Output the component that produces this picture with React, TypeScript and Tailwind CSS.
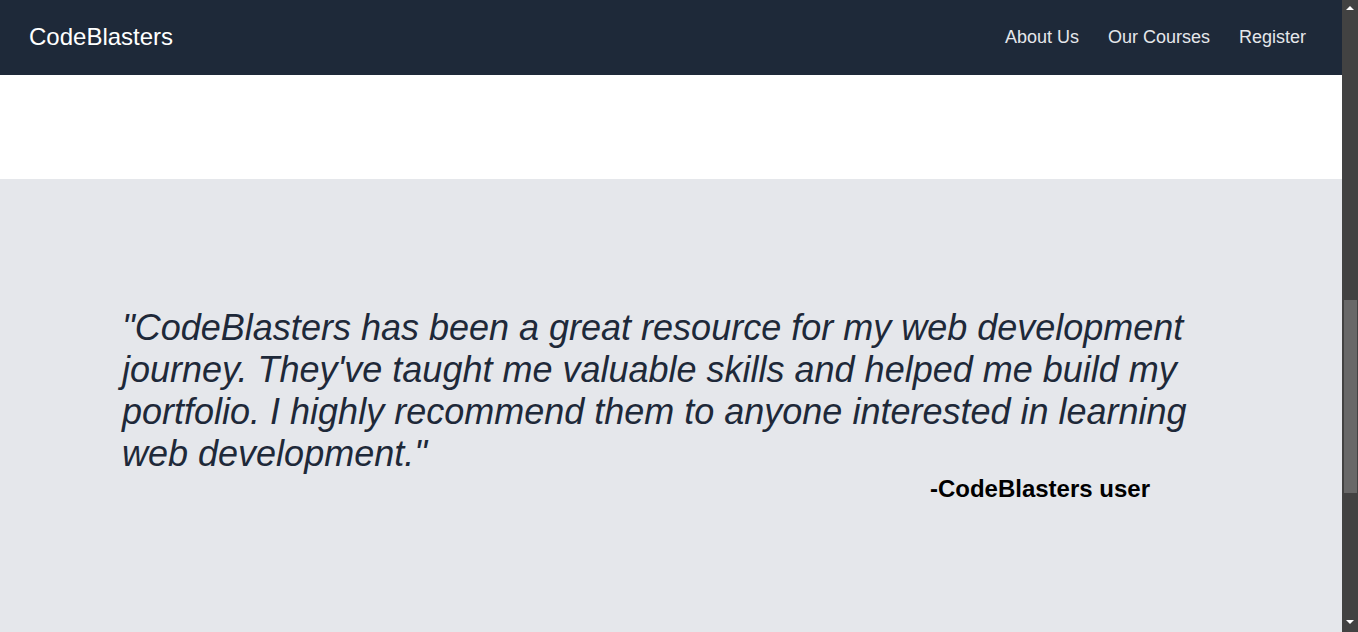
const Navbar = () => {
  const links = ["About Us", "Our Courses", "Register"];

  return (
    <nav className="h-[75px] shrink-0 bg-gray-800 flex items-center justify-between pl-[29px] pr-9 pb-0.5">
      <a href="#" className="text-white text-2xl">CodeBlasters</a>
      <ul className="flex items-center gap-[29px]">
        {links.map(link => (
          <li key={link}>
            <a href="#" className="text-gray-200 text-lg hover:text-white">{link}</a>
          </li>
        ))}
      </ul>
    </nav>
  );
};

const Testimonial = () => (
  <section className="bg-gray-200 flex-1 pt-32">
    <div className="max-w-[1102px] mx-auto">
      <blockquote className="italic text-4xl leading-[42px] text-gray-800 pl-0.5">
        "CodeBlasters has been a great resource for my web development journey. They've taught me valuable skills and helped me build my portfolio. I highly recommend them to anyone interested in learning web development."
      </blockquote>
      <p className="text-right font-bold text-2xl leading-7 text-black pr-[72px]">-CodeBlasters user</p>
    </div>
  </section>
);

// window scrollbar, page is scrolled about halfway down
const Scrollbar = () => (
  <div className="w-4 shrink-0 bg-[#424242] flex flex-col">
    <div className="h-4 flex items-center justify-center">
      <svg width="8" height="4" viewBox="0 0 8 4"><path d="M0 4 L4 0 L8 4 Z" fill="#fff" /></svg>
    </div>
    <div className="flex-1 pt-[284px]">
      <div className="h-[193px] ml-[2px] w-[13px] bg-[#686868]" />
    </div>
    <div className="h-4 flex items-start justify-center pt-[4px]">
      <svg width="8" height="4" viewBox="0 0 8 4"><path d="M0 0 L8 0 L4 4 Z" fill="#fff" /></svg>
    </div>
  </div>
);

export default function App() {
  return (
    <div className="h-screen flex overflow-hidden font-['Liberation_Sans',Arial,sans-serif]">
      <div className="flex-1 flex flex-col">
        <Navbar />
        <div className="h-[104px] shrink-0 bg-white" />
        <Testimonial />
      </div>
      <Scrollbar />
    </div>
  );
}
